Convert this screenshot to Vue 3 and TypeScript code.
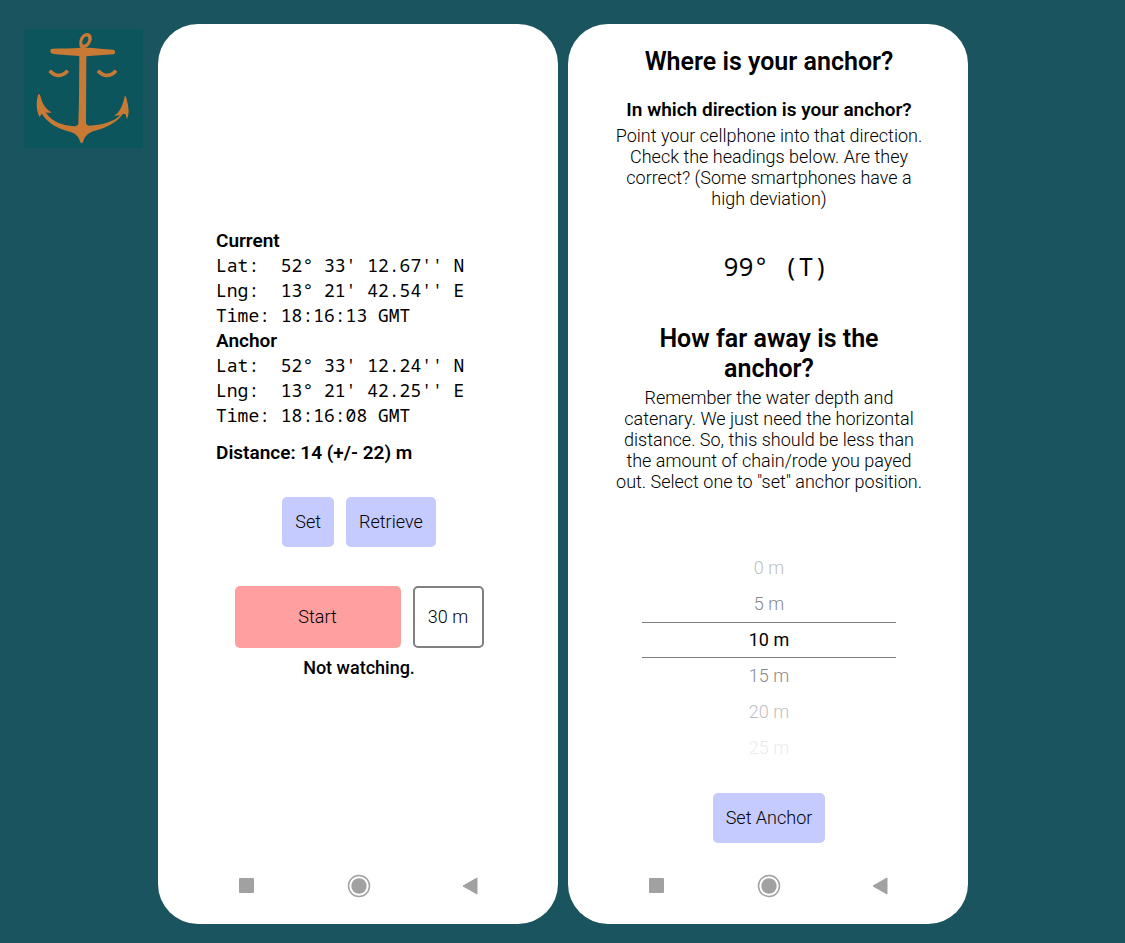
<script setup lang="ts">
import { ref } from 'vue'

interface Fix {
  title: string
  lines: string[]
}

const fixes: Fix[] = [
  { title: 'Current', lines: ["Lat:  52° 33' 12.67'' N", "Lng:  13° 21' 42.54'' E", 'Time: 18:16:13 GMT'] },
  { title: 'Anchor', lines: ["Lat:  52° 33' 12.24'' N", "Lng:  13° 21' 42.25'' E", 'Time: 18:16:08 GMT'] },
]

const distances: number[] = [0, 5, 10, 15, 20, 25]
const selected = ref<number>(10)

function fade(value: number): string {
  const steps = Math.abs(value - selected.value) / 5
  return `step-${Math.min(steps, 3)}`
}
</script>

<template>
  <main class="page">
    <svg class="logo" viewBox="30 27 357 357" role="img" aria-label="Anchor logo">
      <rect x="30" y="27" width="357" height="357" fill="#0d555c" />
      <g fill="#c87933">
        <path
          fill-rule="evenodd"
          d="M203 87C196 82 194 72 197 60C200 48 209 39 220 39C231 40 235 49 233 59C230 71 224 79 215 83L217 87ZM208 74C216 74 223 65 223 56C223 48 216 48 210 54C204 61 203 71 208 74Z"
        />
        <path
          d="M115 86C145 85 170 85 200 83H217C245 84 272 87 298 89Q303 90 303 95V98Q303 103 298 103C270 105 240 107 217 109L216 308Q217 316 226 317C262 316 299 306 319 286Q310 286 301 288C318 276 327 256 332 229Q334 226 336 231C341 248 344 263 344 276Q343 287 339 297Q336 293 335 283L327 281C305 313 266 326 237 334C218 341 212 352 207 366Q203 374 199 366C194 350 187 341 168 335C131 326 101 309 83 281L77 291C71 280 68 268 68 252C69 240 70 230 73 223Q76 219 79 228C85 250 93 266 113 277Q104 280 95 277C113 306 147 317 180 319Q193 318 193 310C196 240 195 180 196 108C167 105 139 104 115 101Q109 100 109 94Q108 86 115 86Z"
        />
      </g>
      <g fill="none" stroke="#c87933" stroke-width="11">
        <path d="M107 152C124 171 146 171 161 152" />
        <path d="M252 152C269 171 291 171 306 152" />
      </g>
    </svg>

    <section class="phone" aria-label="Anchor watch">
      <div class="watch">
        <div class="readings">
          <div v-for="fix in fixes" :key="fix.title">
            <h2 class="label">{{ fix.title }}</h2>
            <p v-for="line in fix.lines" :key="line" class="reading">{{ line }}</p>
          </div>
          <p class="label distance">Distance: 14 (+/- 22) m</p>
        </div>
        <div class="row">
          <button type="button" class="btn">Set</button>
          <button type="button" class="btn">Retrieve</button>
        </div>
        <div class="row alarm">
          <button type="button" class="btn start">Start</button>
          <button type="button" class="btn radius">30 m</button>
        </div>
        <p class="status">Not watching.</p>
      </div>
      <nav class="keys" aria-label="Watch navigation">
        <button type="button" class="key" aria-label="Recent apps">
          <svg viewBox="0 0 24 24"><rect x="4" y="4" width="15" height="15" rx="1" fill="#a1a1a1" /></svg>
        </button>
        <button type="button" class="key" aria-label="Home">
          <svg viewBox="0 0 24 24">
            <circle cx="12" cy="12" r="10.5" fill="none" stroke="#a1a1a1" stroke-width="1.5" />
            <circle cx="12" cy="12" r="7.7" fill="#a1a1a1" />
          </svg>
        </button>
        <button type="button" class="key" aria-label="Back">
          <svg viewBox="0 0 24 24"><path d="M4 12L18 4V20Z" fill="#a1a1a1" stroke="#a1a1a1" stroke-linejoin="round" /></svg>
        </button>
      </nav>
    </section>

    <section class="phone" aria-label="Set anchor position">
      <div class="setup">
        <h1 class="title">Where is your anchor?</h1>
        <h2 class="label question">In which direction is your anchor?</h2>
        <p class="copy">
          Point your cellphone into that direction. Check the headings below. Are they correct? (Some
          smartphones have a high deviation)
        </p>
        <p class="heading">99° (T)</p>
        <h2 class="title far">How far away is the anchor?</h2>
        <p class="copy">
          Remember the water depth and catenary. We just need the horizontal distance. So, this should
          be less than the amount of chain/rode you payed out. Select one to "set" anchor position.
        </p>
        <div class="wheel" role="radiogroup" aria-label="Distance to anchor">
          <label v-for="value in distances" :key="value" class="option" :class="fade(value)">
            <input v-model="selected" type="radio" name="distance" :value="value" />
            <span>{{ value }} m</span>
          </label>
        </div>
        <button type="button" class="btn">Set Anchor</button>
      </div>
      <nav class="keys" aria-label="Setup navigation">
        <button type="button" class="key" aria-label="Recent apps">
          <svg viewBox="0 0 24 24"><rect x="4" y="4" width="15" height="15" rx="1" fill="#a1a1a1" /></svg>
        </button>
        <button type="button" class="key" aria-label="Home">
          <svg viewBox="0 0 24 24">
            <circle cx="12" cy="12" r="10.5" fill="none" stroke="#a1a1a1" stroke-width="1.5" />
            <circle cx="12" cy="12" r="7.7" fill="#a1a1a1" />
          </svg>
        </button>
        <button type="button" class="key" aria-label="Back">
          <svg viewBox="0 0 24 24"><path d="M4 12L18 4V20Z" fill="#a1a1a1" stroke="#a1a1a1" stroke-linejoin="round" /></svg>
        </button>
      </nav>
    </section>
  </main>
</template>

<style>
body {
  margin: 0;
  background: #1a545e;
}
</style>

<style scoped>
.page {
  box-sizing: border-box;
  min-height: 100vh;
  padding: 24px 24px 19px;
  display: flex;
  align-items: stretch;
  gap: 10px;
  font-family: Roboto, "Liberation Sans", sans-serif;
  font-size: 18px;
  color: #000;
}
h1,
h2,
p {
  margin: 0;
}
.logo {
  flex: none;
  align-self: flex-start;
  width: 119px;
  height: 119px;
  margin: 5px 5px 0 0;
}
.phone {
  box-sizing: border-box;
  flex: 0 1 400px;
  display: flex;
  flex-direction: column;
  background: #fff;
  border-radius: 40px;
}
.watch,
.setup {
  flex: 1;
  display: flex;
  flex-direction: column;
  align-items: center;
}
.watch {
  padding: 204px 56px 0 58px;
}
.setup {
  padding: 23px 40px 0 42px;
  text-align: center;
}
.readings {
  align-self: stretch;
}
.label {
  font-size: 19px;
  line-height: 25px;
  font-weight: 600;
}
.status {
  font-weight: 500;
  line-height: 25px;
}
.reading {
  font-family: "Noto Sans Mono", "DejaVu Sans Mono", monospace;
  font-size: 18px;
  line-height: 25px;
  white-space: pre;
}
.distance {
  padding-top: 12px;
}
.row {
  display: flex;
  gap: 12px;
  margin-top: 32px;
}
.alarm {
  margin: 39px 0 7px;
}
.btn {
  height: 50px;
  padding: 0 13px;
  border: 0;
  border-radius: 5px;
  background: #c6cbff;
  font: 300 18px/24px Roboto, "Liberation Sans", sans-serif;
  color: #000;
  cursor: pointer;
}
.start {
  width: 166px;
  height: 62px;
  background: #ff9f9f;
}
.radius {
  width: 71px;
  height: 62px;
  padding: 0;
  border: 2px solid #808080;
  background: #fff;
}
.title {
  font-size: 25px;
  line-height: 30px;
  font-weight: 600;
}
.question {
  margin-top: 20px;
}
.copy {
  line-height: 21px;
  padding: 3px 0 2px;
  max-width: 315px;
  font-weight: 300;
}
.heading {
  margin: 37px 0 40px 14px;
  font-family: "Noto Sans Mono", "DejaVu Sans Mono", monospace;
  font-size: 25px;
  line-height: 36px;
}
.far {
  padding: 0 30px;
}
.wheel {
  width: 254px;
  margin: 56px 0 27px;
  font-weight: 300;
}
.option {
  display: block;
  box-sizing: border-box;
  height: 36px;
  line-height: 36px;
  cursor: pointer;
}
.option input {
  appearance: none;
  position: absolute;
  margin: 0;
}
.step-0 {
  border-top: 1px solid #808080;
  border-bottom: 1px solid #808080;
  line-height: 34px;
  font-weight: 400;
}
.step-1 {
  color: #888;
}
.step-2 {
  color: #c0c0c0;
}
.step-3 {
  color: #ebebeb;
}
.keys {
  display: flex;
  justify-content: space-between;
  padding: 0 75px 26px 77px;
}
.key {
  width: 24px;
  height: 24px;
  padding: 0;
  border: 0;
  background: none;
  cursor: pointer;
}
.key svg {
  display: block;
}
</style>
